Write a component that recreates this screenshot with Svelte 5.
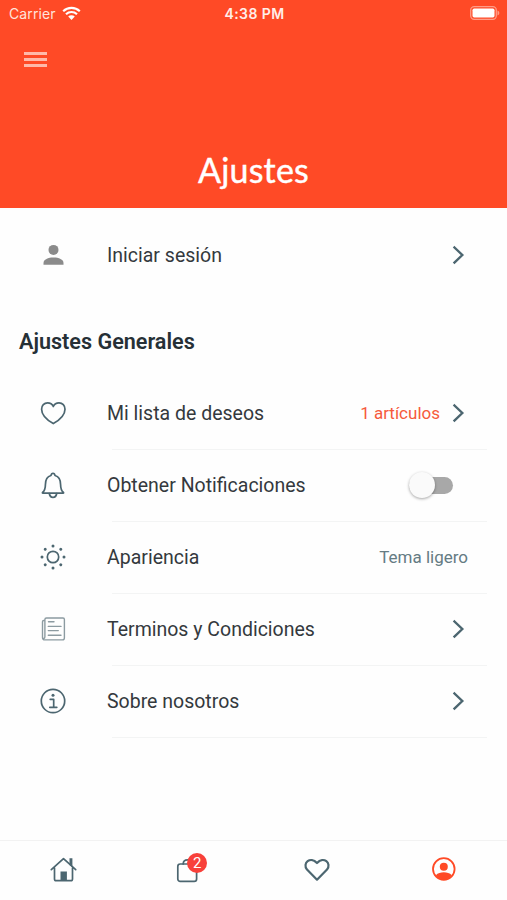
<script>
  let notifications = $state(false);

  const settings = [
    { icon: 'heart', label: 'Mi lista de deseos', detail: '1 artículos', chevron: true },
    { icon: 'bell', label: 'Obtener Notificaciones', toggle: true },
    { icon: 'sun', label: 'Apariencia', theme: 'Tema ligero' },
    { icon: 'news', label: 'Terminos y Condiciones', chevron: true },
    { icon: 'info', label: 'Sobre nosotros', chevron: true }
  ];
</script>

{#snippet chevron()}
  <svg class="chevron" width="13" height="20" viewBox="0 0 13 20"><path d="M2.500 2.500l7.800 7.500-7.800 7.500" /></svg>
{/snippet}

{#snippet icon(name)}
  <svg class="icon {name}" width="28" height="28" viewBox="0 0 28 28">
    {#if name === 'user'}
      <circle cx="14.500" cy="8.900" r="5" />
      <path d="M4.500 23.700v-1.700c0-3.500 4.600-5.400 10-5.400s10 1.900 10 5.400v1.700z" />
    {:else if name === 'heart'}
      <path d="M14.300 24.600C10.300 22.300 2.600 16.700 2.600 10.200c0-3.500 2.500-6.400 6-6.400 2.600 0 4.700 1.400 5.700 3.700 1-2.300 3.100-3.700 5.700-3.700 3.500 0 6 2.900 6 6.400 0 6.500-7.700 12.100-11.700 14.400z" />
    {:else if name === 'bell'}
      <path d="M3.500 21.500c2.400-2 2.900-4.200 2.900-7.800 0-5.300 1.900-8.300 5.600-9.200C12.200 3 13 2.300 14 2.300s1.800.7 2 2.200c3.700.9 5.600 3.900 5.600 9.200 0 3.600.5 5.800 2.900 7.800.3.300.1.700-.3.700H3.800c-.4 0-.6-.4-.3-.7z" />
      <path d="M10.300 22.500c.4 2.400 1.700 3.800 3.700 3.800s3.300-1.400 3.700-3.800" />
    {:else if name === 'sun'}
      <circle cx="14" cy="14" r="5.700" />
      {#each [0, 45, 90, 135, 180, 225, 270, 315] as angle}
        <circle class="ray" cx="14" cy="3" r="1.500" transform="rotate({angle} 14 14)" />
      {/each}
    {:else if name === 'news'}
      <path d="M5.900 5.500H4.700a1.200 1.200 0 0 0-1.200 1.200v15.800c0 1.500 1 2.400 2.500 2.400h17.300c1.300 0 2.100-.9 2.100-2.200V4.400c0-.9-.6-1.400-1.400-1.400H7.500c-1 0-1.600.6-1.600 1.500v17.200c0 2.200-2.200 2.200-2.400.8" />
      <path d="M9.500 6.700h5.500M9.300 11.400h12.700M9.300 15.600h10M9.300 20.300h12.700" />
    {:else if name === 'info'}
      <circle cx="14" cy="14" r="11.700" />
      <circle class="dot" cx="14" cy="8.200" r="1.500" />
      <path d="M11.200 12.300h3.500v8M10.800 20.300h7" />
    {/if}
  </svg>
{/snippet}

<div class="screen">
  <header>
    <div class="status">
      <span class="carrier">
        Carrier
        <svg width="19" height="15" viewBox="0 0 19 15">
          <path d="M1.200 5.200a12 12 0 0 1 16.600 0M4 8.200a8 8 0 0 1 11 0" />
          <path class="wedge" d="M9.500 14l3.300-3.500a4.700 4.700 0 0 0-6.600 0z" />
        </svg>
      </span>
      <span class="time">4:38 PM</span>
      <svg class="battery" width="30" height="14" viewBox="0 0 30 14">
        <rect class="shell" x=".7" y=".7" width="25.600" height="12.600" rx="3.500" />
        <rect x="2.500" y="2.500" width="22" height="9" rx="1.700" />
        <path class="tip" d="M27.500 4.500c2.400.8 2.400 4.200 0 5z" />
      </svg>
    </div>
    <button class="menu" aria-label="Menu"><i></i><i></i><i></i></button>
    <h1>Ajustes</h1>
  </header>

  <main>
    <div class="row login">
      {@render icon('user')}
      <div class="body">
        <span class="label">Iniciar sesión</span>
        {@render chevron()}
      </div>
    </div>

    <h2>Ajustes Generales</h2>

    {#each settings as item}
      <div class="row">
        {@render icon(item.icon)}
        <div class="body">
          <span class="label">{item.label}</span>
          {#if item.detail}
            <span class="detail">{item.detail}</span>
          {/if}
          {#if item.theme}
            <span class="theme">{item.theme}</span>
          {/if}
          {#if item.toggle}
            <button
              class="switch"
              class:on={notifications}
              role="switch"
              aria-checked={notifications}
              aria-label={item.label}
              onclick={() => (notifications = !notifications)}
            ><span class="knob"></span></button>
          {/if}
          {#if item.chevron}
            {@render chevron()}
          {/if}
        </div>
      </div>
    {/each}
  </main>

  <nav>
    <div class="tab">
      <svg width="28" height="28" viewBox="0 0 28 28">
        <path d="M2.300 13.600L14.500 2.600l12.200 11M5.500 12v11c0 1.200.5 1.700 1.700 1.700h14.600c1.200 0 1.700-.5 1.700-1.700V12" />
        <path class="solid" d="M11.500 15.600h6.400v9h-6.400zM20.500 2.300h2.900v9L20.500 9z" />
      </svg>
    </div>
    <div class="tab cart">
      <svg width="28" height="28" viewBox="0 0 28 28">
        <rect x="1.800" y="8" width="18.800" height="17.300" rx="2.400" />
        <path d="M7.200 8c0-2.800 1.600-4.200 4.300-4.200S15.800 5.200 15.800 8" />
      </svg>
      <span class="badge">2</span>
    </div>
    <div class="tab">
      <svg class="like" width="28" height="28" viewBox="0 0 28 28">
        <path d="M14 23.700L4 13.600C-1 7.200 7.400-.2 14 7c6.600-7.200 15 .2 10 6.600z" />
      </svg>
    </div>
    <div class="tab active">
      <svg width="28" height="28" viewBox="0 0 28 28">
        <circle cx="13.800" cy="13" r="10.800" />
        <circle class="solid" cx="13.800" cy="10.800" r="4" />
        <path class="solid" d="M5.800 19.300c2-2.300 5-3 8-3s6 .7 8 3c-2 2.900-5 4.300-8 4.300s-6-1.400-8-4.300z" />
      </svg>
    </div>
  </nav>
</div>

<style>
  :global(body) {
    margin: 0;
    background: #fefefe;
  }

  .screen {
    display: flex;
    flex-direction: column;
    height: 900px;
    font-family: Roboto, sans-serif;
    color: #34393d;
  }

  svg {
    display: block;
    flex: none;
    fill: none;
    stroke: #4c6670;
    stroke-width: 1.7;
    stroke-linecap: round;
    stroke-linejoin: round;
  }

  button {
    border: 0;
    padding: 0;
    background: none;
  }

  header {
    display: flex;
    flex-direction: column;
    box-sizing: border-box;
    height: 208px;
    background: #ff4a26;
    color: #fff;
  }

  .status {
    display: grid;
    grid-template-columns: 1fr auto 1fr;
    align-items: center;
    height: 26px;
    padding: 0 7px 0 9px;
    font-family: Inter, sans-serif;
    font-size: 14px;

    svg {
      stroke: #fff;
      stroke-width: 2.2;
      stroke-linecap: butt;
    }
  }

  .carrier {
    display: flex;
    align-items: center;
    gap: 6px;
    letter-spacing: 0.1px;
    color: #ffe3dc;

    .wedge {
      fill: #fff;
      stroke: none;
    }
  }

  .time {
    font-weight: 600;
    letter-spacing: 0.4px;
    color: #ffeee9;
  }

  .status .battery {
    justify-self: end;
    fill: #fff;
    stroke: none;

    .shell {
      fill: none;
      stroke: #ff9c87;
      stroke-width: 1.3;
    }

    .tip {
      fill: #ff9c87;
    }
  }

  .menu {
    display: flex;
    flex-direction: column;
    gap: 3px;
    width: 23px;
    margin: 26px 0 0 24px;

    i {
      height: 3px;
      background: #ffb9a9;
    }
  }

  h1 {
    margin: auto 0 16px;
    font: 400 34px/44px Lato, sans-serif;
    letter-spacing: 0.2px;
    text-align: center;
    -webkit-text-stroke: 0.4px #fff;
  }

  main {
    flex: 1;
  }

  .row {
    display: flex;
    align-items: center;
    gap: 40px;
    height: 72px;
    padding: 0 20px 0 39px;
  }

  .icon {
    margin-bottom: 3px;
  }

  .body {
    position: relative;
    display: flex;
    align-items: center;
    box-sizing: border-box;
    flex: 1;
    height: 100%;
    padding: 0 22px 2px 0;

    &::after {
      content: '';
      position: absolute;
      left: 5px;
      right: 0;
      bottom: 0;
      height: 1px;
      background: #f3f4f4;
    }
  }

  .login {
    height: 94px;

    .icon {
      margin-bottom: 0;
    }

    .body {
      padding-bottom: 0;

      &::after {
        display: none;
      }
    }
  }

  .label {
    flex: 1;
    font-size: 19.5px;
  }

  .user {
    fill: #8b8b8b;
    stroke: none;
  }

  .sun .ray,
  .info .dot {
    fill: #4c6670;
    stroke: none;
  }

  .news {
    stroke: #8c9ba1;
    stroke-width: 1.4;
  }

  .chevron {
    stroke-width: 2.4;
    stroke-linecap: square;
    stroke-linejoin: miter;
  }

  h2 {
    margin: 0;
    padding: 24px 19px 20px;
    font-size: 21.6px;
    font-weight: 600;
    line-height: 32px;
    color: #263036;
  }

  .detail {
    margin-right: 12px;
    font-size: 17px;
    color: #f65a3c;
  }

  .theme {
    margin-right: -3px;
    font-size: 17px;
    color: #657b83;
  }

  .switch {
    display: flex;
    align-items: center;
    width: 44px;
    height: 17px;
    margin-right: 12px;
    border-radius: 9px;
    background: #a8a8a8;

    &.on {
      justify-content: flex-end;
    }
  }

  .knob {
    width: 26px;
    height: 26px;
    border-radius: 50%;
    background: #fafafa;
    box-shadow: 0 1px 3px rgba(0, 0, 0, 0.35);
  }

  nav {
    display: flex;
    box-sizing: border-box;
    height: 60px;
    padding-top: 15px;
    border-top: 1px solid #f2f2f2;
  }

  .tab {
    position: relative;
    display: flex;
    justify-content: center;
    flex: 1;
    height: 28px;

    .solid {
      fill: #4c6670;
      stroke: none;
    }

    .like {
      stroke-width: 2.2;
    }
  }

  .badge {
    position: absolute;
    left: calc(50% - 3px);
    top: -3px;
    width: 20px;
    height: 20px;
    border-radius: 50%;
    background: #f8403a;
    color: #fff;
    font: 15px/20px Roboto, sans-serif;
    text-align: center;
  }

  .active {
    svg {
      stroke: #ff4a26;
      stroke-width: 1.8;
    }

    .solid {
      fill: #ff4a26;
    }
  }
</style>
